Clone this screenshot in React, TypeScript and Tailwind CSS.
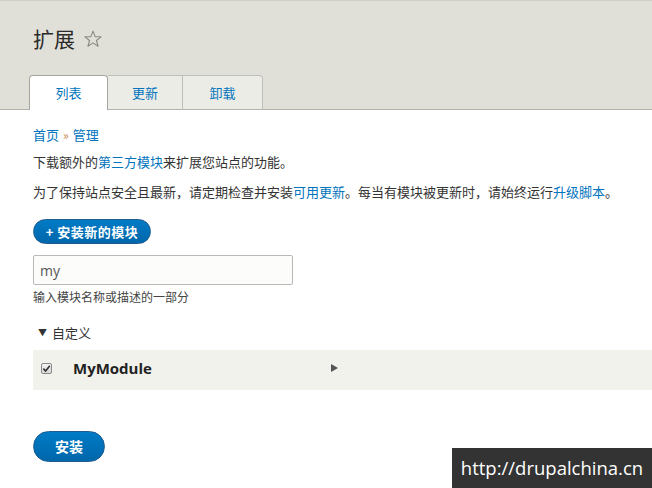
import React from "react";

const font = { fontFamily: '"Noto Sans CJK SC", "Liberation Sans", sans-serif' };

export default function App() {
  return (
    <div className="relative w-[652px] h-[488px] overflow-hidden bg-white text-[13px] text-[#333]" style={font}>
      {/* header */}
      <div className="h-[110px] bg-[#e0dfd8] border-b border-[#b3b2ac] flex flex-col">
        <div className="h-[1px] bg-[#cfcec8]" />
        <div className="flex items-center gap-[8px] pl-[33px] pt-[24px] h-[50px]">
          <span className="text-[21px] leading-none text-[#2a2a2a]">扩展</span>
          <svg width="20" height="20" viewBox="0 0 24 24" className="mt-[1px]">
            <polygon
              points="12,2.5 14.6,9.2 21.7,9.4 16.1,13.8 18.1,20.7 12,16.7 5.9,20.7 7.9,13.8 2.3,9.4 9.4,9.2"
              fill="none"
              stroke="#8a8a84"
              strokeWidth="1.3"
              strokeLinejoin="round"
            />
          </svg>
        </div>
        <div className="flex-1" />
        <div className="flex pl-[29px] h-[35px] -mb-[1px]">
          <div className="w-[79px] bg-white border border-b-0 border-[#a6a6a0] rounded-t-[4px] flex items-center justify-center text-[#0074bd] text-[13px]">
            列表
          </div>
          <div className="w-[75px] bg-[#ecece7] border-t border-r border-[#bfbfba] border-b border-b-[#b3b2ac] flex items-center justify-center text-[#0074bd]">
            更新
          </div>
          <div className="w-[80px] bg-[#ecece7] border-t border-r border-[#bfbfba] border-b border-b-[#b3b2ac] rounded-tr-[4px] flex items-center justify-center text-[#0074bd]">
            卸载
          </div>
        </div>
      </div>

      {/* content */}
      <div className="pl-[33px] pt-[15px] flex flex-col">
        <div className="h-[20px] flex items-center text-[#0074bd]">
          <span>首页</span>
          <span className="mx-[4px] text-[#c8874a] text-[12px]">»</span>
          <span>管理</span>
        </div>
        <div className="mt-[7px] h-[20px] flex items-center whitespace-nowrap">
          下载额外的<span className="text-[#0074bd]">第三方模块</span>来扩展您站点的功能。
        </div>
        <div className="mt-[10px] h-[20px] flex items-center whitespace-nowrap">
          为了保持站点安全且最新，请定期检查并安装<span className="text-[#0074bd]">可用更新</span>。每当有模块被更新时，请始终运行<span className="text-[#0074bd]">升级脚本</span>。
        </div>
        <div className="mt-[17px]">
          <button className="h-[25px] w-[118px] rounded-full bg-gradient-to-b from-[#007bc6] to-[#0067ab] border border-[#1e5c90] text-white font-bold text-[13px] flex items-center justify-center tracking-[0.5px]">
            + 安装新的模块
          </button>
        </div>
        <div className="mt-[11px] w-[260px] h-[30px] border border-[#b8b8b8] rounded-[2px] bg-[#fcfcfa] flex items-center px-[6px] text-[14px] text-[#555]" style={{ fontFamily: '"Open Sans", "Liberation Sans", sans-serif' }}>
          my
        </div>
        <div className="mt-[2px] h-[20px] flex items-center text-[12px] text-[#444]">
          输入模块名称或描述的一部分
        </div>
        <div className="mt-[16px] h-[20px] flex items-center pl-[5px] text-[#333]">
          <span className="text-[9px] mr-[5px]">▼</span>
          <span>自定义</span>
        </div>
      </div>

      {/* module row */}
      <div className="ml-[33px] mt-[7px] h-[40px] pb-[4px] bg-[#f2f2ed] flex items-center">
        <div className="ml-[8px] w-[11px] h-[11px] rounded-[2px] border border-[#8a8a8a] bg-gradient-to-b from-[#f4f4f4] to-[#d8d8d8] flex items-center justify-center">
          <svg width="9" height="9" viewBox="0 0 10 10">
            <path d="M1.5 5.2 L4 7.8 L8.7 2" fill="none" stroke="#333" strokeWidth="1.8" />
          </svg>
        </div>
        <span className="ml-[21px] font-bold text-[15px] text-[#222]" style={{ fontFamily: '"Open Sans", "Liberation Sans", sans-serif' }}>
          MyModule
        </span>
        <div className="ml-[179px] w-0 h-0 border-y-[4px] border-y-transparent border-l-[7px] border-l-[#555]" />
      </div>

      <div className="pl-[33px] mt-[41px]">
        <button className="h-[31px] w-[72px] rounded-full bg-gradient-to-b from-[#007bc6] to-[#0067ab] border border-[#1e5c90] text-white font-bold text-[14px] flex items-center justify-center">
          安装
        </button>
      </div>

      {/* watermark overlay */}
      <div className="absolute left-[452px] top-[448px] w-[200px] h-[40px] bg-[#333333] flex items-center justify-center text-[18.5px] text-white" style={{ fontFamily: '"Open Sans", "Liberation Sans", sans-serif' }}>
        http://drupalchina.cn
      </div>
    </div>
  );
}
